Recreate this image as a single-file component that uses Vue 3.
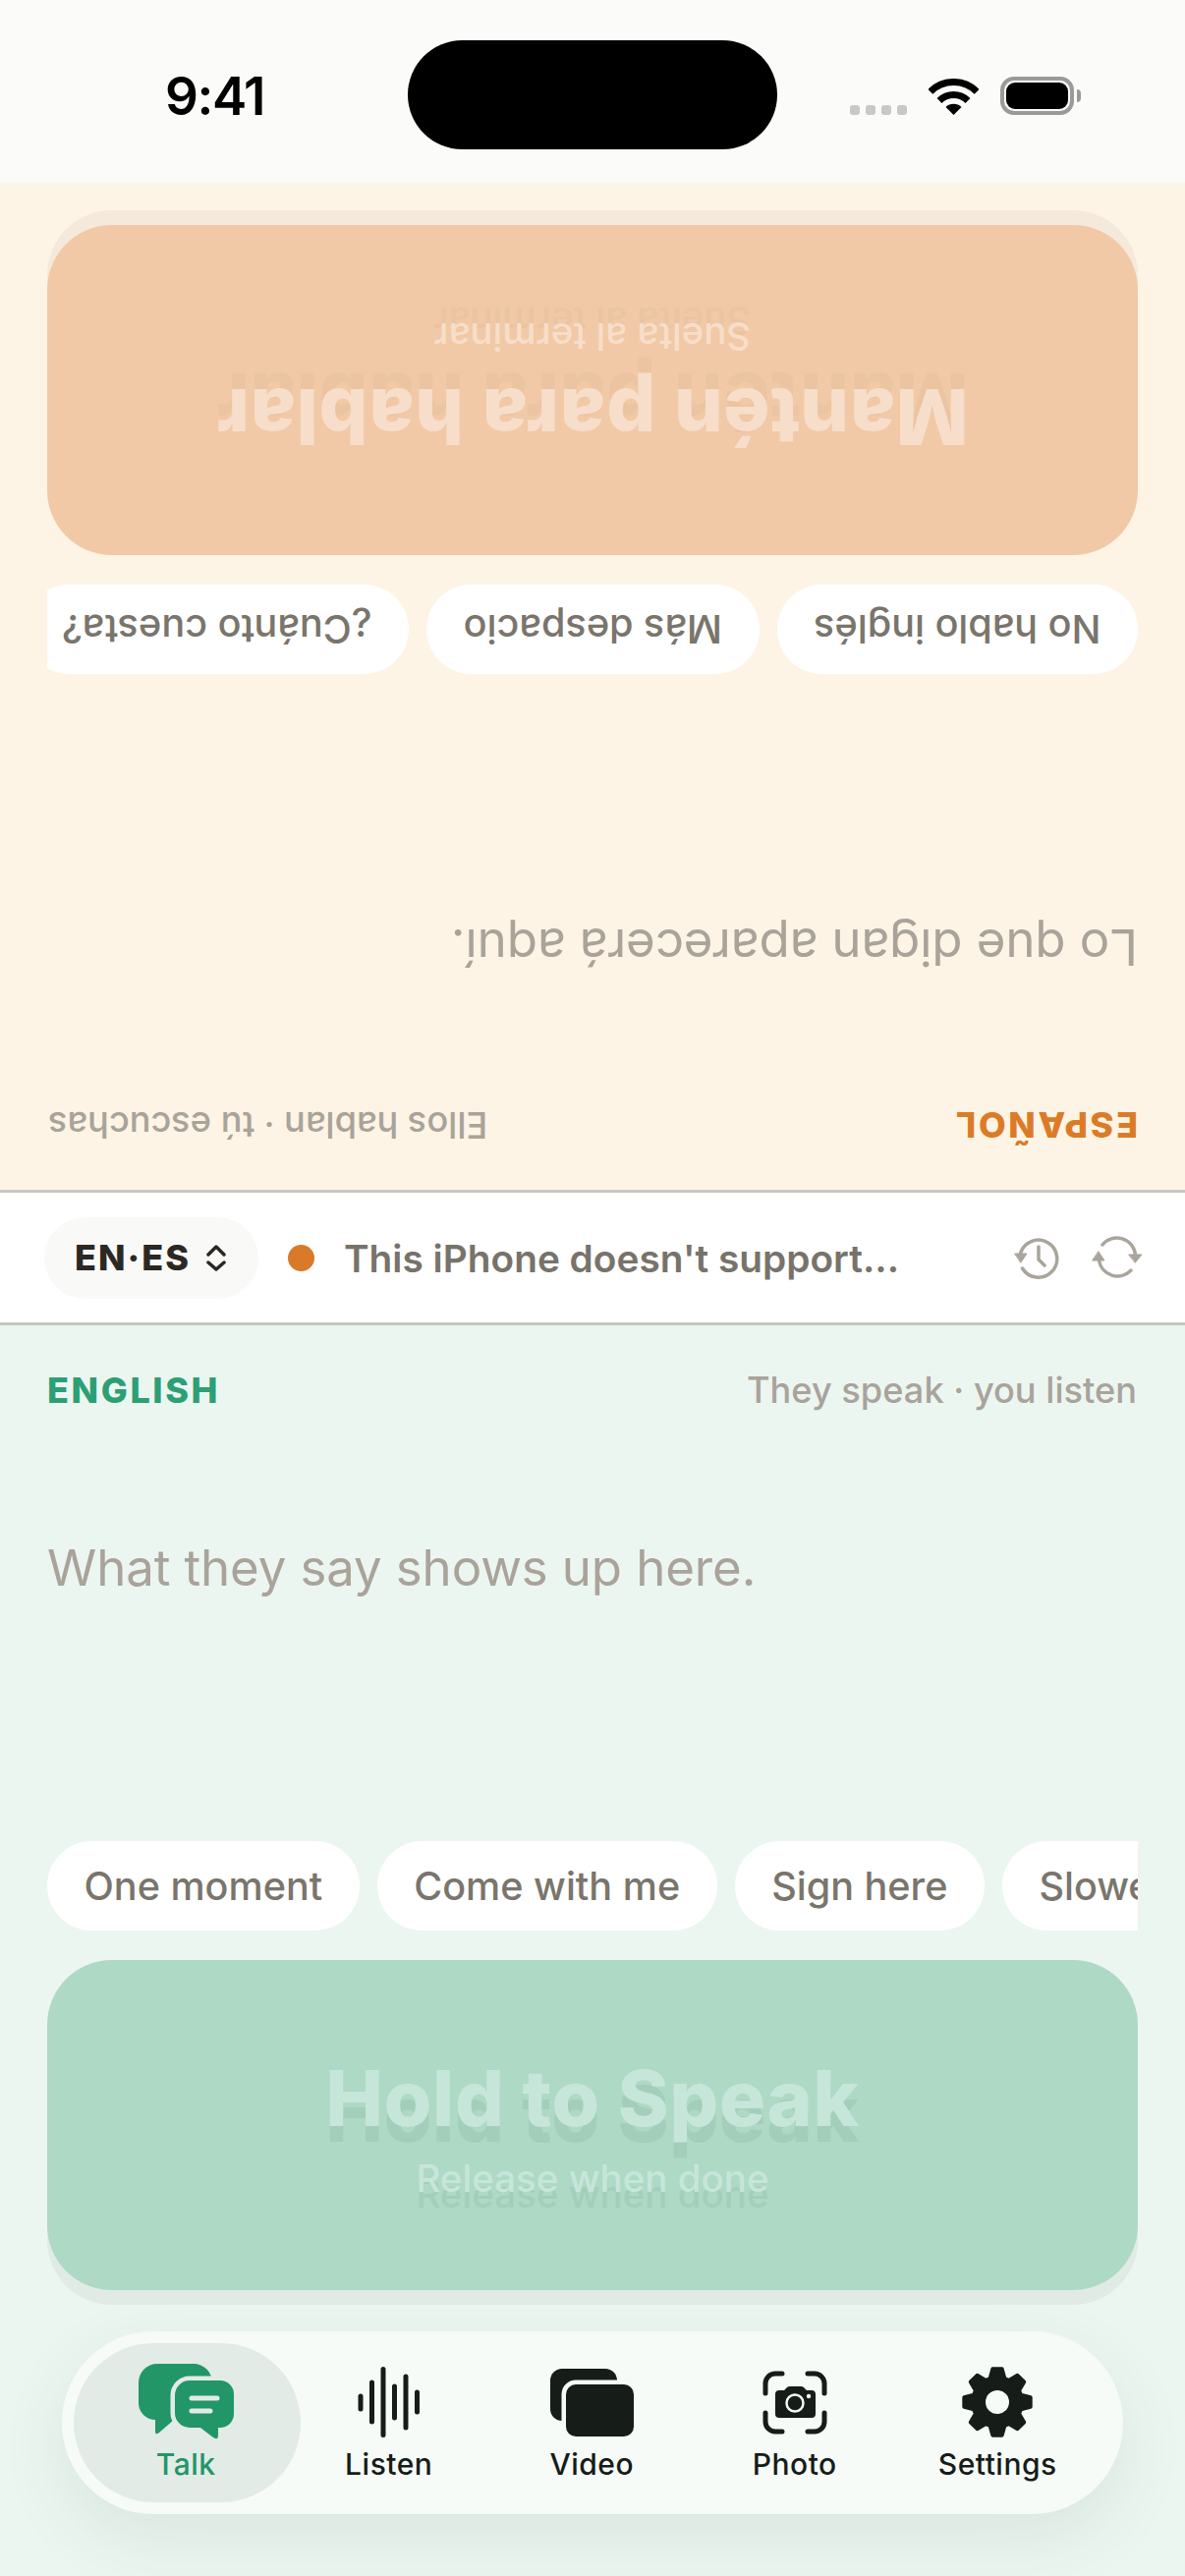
<template>
  <div class="phone">
    <div class="status-bar">
      <span class="time">9:41</span>
      <div class="island"></div>
      <div class="status-icons">
        <div class="signal"><i v-for="n in 4" :key="n"></i></div>
        <svg class="wifi" width="51" height="37" viewBox="0 0 51 37">
          <path d="M1.8 13.3A33.5 33.5 0 0 1 49.2 13.3" fill="none" stroke="#000" stroke-width="7" />
          <path d="M11 22.5A20.5 20.5 0 0 1 40 22.5" fill="none" stroke="#000" stroke-width="7" />
          <path d="M25.5 37L17.5 29A11.3 11.3 0 0 1 33.5 29Z" fill="#000" />
        </svg>
        <div class="battery"><div class="battery-level"></div></div>
      </div>
    </div>

    <template v-for="(panel, index) in panels" :key="panel.label">
      <section class="panel" :class="panel.theme">
        <div class="panel-head">
          <span class="lang">{{ panel.label }}</span>
          <span class="hint">{{ panel.hint }}</span>
        </div>
        <p class="transcript">{{ panel.placeholder }}</p>
        <div class="chips">
          <span class="chip" v-for="chip in panel.chips" :key="chip">{{ chip }}</span>
        </div>
        <div class="hold">
          <div class="hold-title">{{ panel.title }}</div>
          <div class="hold-sub">{{ panel.sub }}</div>
        </div>
      </section>

      <div class="middle" v-if="index === 0">
        <div class="lang-pill">
          <span>EN·ES</span>
          <svg width="20" height="27" viewBox="0 0 20 27" fill="none" stroke="#2b2824" stroke-width="3.5" stroke-linecap="round" stroke-linejoin="round">
            <path d="M2 10L10 2L18 10" />
            <path d="M2 18L10 25L18 18" />
          </svg>
        </div>
        <span class="dot"></span>
        <span class="message">This iPhone doesn't support...</span>
        <svg class="tool" width="60" height="50" viewBox="0 0 60 50" fill="none" stroke="#aaa59c" stroke-width="3.5" stroke-linecap="round" stroke-linejoin="round">
          <path d="M11.5 21A19 19 0 1 1 13.5 36" />
          <path d="M30 14V27L36 33" />
          <path d="M6 21H18L12 30Z" fill="#aaa59c" stroke-width="1" />
        </svg>
        <svg class="tool" width="60" height="50" viewBox="0 0 60 50" fill="none" stroke="#aaa59c" stroke-width="3.5" stroke-linecap="round" stroke-linejoin="round">
          <path d="M15 12A19 19 0 0 1 48.5 22" />
          <path d="M42 22H55L48.5 30Z" fill="#aaa59c" stroke-width="1" />
          <path d="M44 38A19 19 0 0 1 11.5 28" />
          <path d="M5 28H17L11 19Z" fill="#aaa59c" stroke-width="1" />
        </svg>
      </div>
    </template>

    <div class="tab-area">
      <nav class="tab-bar">
        <div class="tab" v-for="tab in tabs" :key="tab.name" :class="{ active: tab.name === 'Talk' }">
          <div class="tab-icon">
            <svg v-if="tab.name === 'Talk'" width="97" height="78" viewBox="0 0 97 78">
              <path fill="#229667" d="M19 0H56A19 19 0 0 1 75 19V57H36L21 70Q17 73 17 69V57A17 17 0 0 1 0 40V19A19 19 0 0 1 19 0Z" />
              <path fill="#229667" stroke="#e2ebe6" stroke-width="9" paint-order="stroke" d="M52 17H83A14 14 0 0 1 97 31V51A14 14 0 0 1 83 65H81V73Q81 78 76 75L63 65H52A15 15 0 0 1 37 50V32A15 15 0 0 1 52 17Z" />
              <path fill="none" stroke="#e2ebe6" stroke-width="5" stroke-linecap="round" d="M54 35H80M54 48H73" />
            </svg>
            <svg v-else-if="tab.name === 'Listen'" width="63" height="72" viewBox="0 0 63 72" fill="none" stroke="#161c18" stroke-width="5" stroke-linecap="round">
              <path d="M3 30V43M14.500 16V56M26 2.500V69.500M37.500 20V52M49 10V62M60.500 26V46" />
            </svg>
            <svg v-else-if="tab.name === 'Video'" width="85" height="69" viewBox="0 0 85 69">
              <rect width="68" height="53" rx="12" fill="#161c18" />
              <rect x="16" y="16" width="69" height="53" rx="10" fill="#161c18" stroke="#f6fbf8" stroke-width="9" paint-order="stroke" />
            </svg>
            <svg v-else-if="tab.name === 'Photo'" width="66" height="65" viewBox="0 0 66 65">
              <path fill="none" stroke="#161c18" stroke-width="5" stroke-linecap="round" d="M3 23V13A10 10 0 0 1 13 3H20M46 3H53A10 10 0 0 1 63 13V23M63 43V52A10 10 0 0 1 53 62H46M20 62H13A10 10 0 0 1 3 52V43" />
              <path fill="#161c18" d="M17 20H22L25 17Q26 16 28 16H39Q41 16 42 17L45 20H50Q54 20 54 24V44Q54 48 50 48H17Q13 48 13 44V24Q13 20 17 20Z" />
              <circle cx="33" cy="33" r="8.500" fill="none" stroke="#f6fbf8" stroke-width="2.500" />
              <circle cx="47" cy="26" r="2.200" fill="#f6fbf8" />
            </svg>
            <svg v-else width="72" height="72" viewBox="-36 -36 72 72">
              <path :d="gearPath" fill="#161c18" stroke="#161c18" stroke-width="4" stroke-linejoin="round" />
              <circle r="12" fill="#f6fbf8" />
            </svg>
          </div>
          <span class="tab-label">{{ tab.name }}</span>
        </div>
      </nav>
    </div>
  </div>
</template>

<script setup>
const panels = [
  {
    theme: "peach",
    label: "ESPAÑOL",
    hint: "Ellos hablan · tú escuchas",
    placeholder: "Lo que digan aparecerá aquí.",
    chips: ["No hablo inglés", "Más despacio", "¿Cuánto cuesta?"],
    title: "Mantén para hablar",
    sub: "Suelta al terminar"
  },
  {
    theme: "mint",
    label: "ENGLISH",
    hint: "They speak · you listen",
    placeholder: "What they say shows up here.",
    chips: ["One moment", "Come with me", "Sign here", "Slower please"],
    title: "Hold to Speak",
    sub: "Release when done"
  }
]

const tabs = [{ name: "Talk" }, { name: "Listen" }, { name: "Video" }, { name: "Photo" }, { name: "Settings" }]

// eight teeth, first one pointing straight up
const gearPath = (() => {
  const points = []
  for (let i = 0; i < 8; i++) {
    const a = (i * Math.PI) / 4 - Math.PI / 2
    const steps = [[-0.3, 25], [-0.14, 34], [0.14, 34], [0.3, 25]]
    steps.forEach(([offset, r]) => {
      points.push((r * Math.cos(a + offset)).toFixed(1) + " " + (r * Math.sin(a + offset)).toFixed(1))
    })
  }
  return "M" + points.join("L") + "Z"
})()
</script>

<style scoped>
.phone {
  width: 1206px;
  height: 2622px;
  overflow: hidden;
  font-family: Inter, "Noto Sans", sans-serif;
  background: #ecf6f1;
}
.status-bar {
  height: 186px;
  box-sizing: border-box;
  background: #fbfbf9;
  display: flex;
  padding-top: 41px;
}
.time {
  width: 415px;
  padding: 27px 0 0 22px;
  text-align: center;
  font-size: 53px;
  line-height: 60px;
  font-weight: 600;
  color: #000;
  box-sizing: border-box;
  letter-spacing: -1.5px;
}
.island {
  width: 376px;
  height: 111px;
  border-radius: 56px;
  background: #000;
}
.status-icons {
  display: flex;
  align-items: flex-end;
  padding: 37px 0 0 74px;
  height: 39px;
}
.signal {
  display: flex;
  gap: 6px;
  margin-right: 22px;
}
.signal i {
  width: 10px;
  height: 10px;
  border-radius: 3px;
  background: #c8c8c6;
}
.wifi {
  margin-right: 22px;
}
.battery {
  width: 75px;
  height: 39px;
  box-sizing: border-box;
  border: 4px solid #9a9a9a;
  border-radius: 14px;
  padding: 2px;
  position: relative;
}
.battery::after {
  content: "";
  position: absolute;
  right: -11px;
  top: 9px;
  width: 4px;
  height: 13px;
  border-radius: 0 4px 4px 0;
  background: #9a9a9a;
}
.battery-level {
  height: 100%;
  border-radius: 9px;
  background: #000;
}
.panel {
  height: 1025px;
  box-sizing: border-box;
  padding: 0 48px 43px;
  display: flex;
  flex-direction: column;
}
.peach {
  background: #fdf4e6;
  transform: rotate(180deg);
}
.mint {
  background: #ecf6f1;
}
.panel-head {
  display: flex;
  justify-content: space-between;
  align-items: baseline;
  padding-top: 44px;
  line-height: 44px;
}
.lang {
  font-size: 36px;
  font-weight: 800;
  letter-spacing: 2.6px;
}
.peach .lang {
  color: #dc7b27;
}
.mint .lang {
  color: #2c9f75;
}
.hint {
  font-size: 36.2px;
  font-weight: 500;
  color: #a9a39a;
  margin-right: 1px;
}
.transcript {
  flex: 1;
  margin: 0;
  padding-top: 126px;
  font-size: 51px;
  line-height: 66px;
  letter-spacing: -0.12px;
  color: #a9a39a;
}
.chips {
  display: flex;
  gap: 18px;
  overflow: hidden;
  flex-shrink: 0;
}
.chip {
  flex-shrink: 0;
  height: 91px;
  line-height: 92px;
  padding: 0 37.5px;
  border-radius: 46px;
  background: #fff;
  color: #7a756c;
  font-size: 39.6px;
  font-weight: 500;
  white-space: nowrap;
}
.hold {
  flex-shrink: 0;
  margin-top: 30px;
  height: 336px;
  box-sizing: border-box;
  padding-top: 4px;
  border-radius: 66px;
  display: flex;
  flex-direction: column;
  align-items: center;
  justify-content: center;
}
.peach .hold {
  background: #f1c9a6;
  box-shadow: 0 15px 0 #f5e9dc;
  color: #f7deca;
  text-shadow: 0 16px 0 #ebc4a2;
}
.mint .hold {
  background: #aed9c5;
  box-shadow: 0 15px 0 #e1ebe6;
  color: #c6e6da;
  text-shadow: 0 16px 0 #a3cfba;
}
.hold-title {
  font-size: 78.5px;
  line-height: 94px;
  font-weight: 800;
  letter-spacing: 0.7px;
}
.hold-sub {
  font-size: 38.5px;
  line-height: 50px;
  font-weight: 500;
  margin-top: 9px;
}
.middle {
  height: 138px;
  box-sizing: border-box;
  border-top: 3px solid #c8c6c2;
  border-bottom: 3px solid #c8c6c2;
  background: #fff;
  display: flex;
  align-items: center;
  padding: 0 39px 0 45px;
}
.lang-pill {
  width: 218px;
  height: 83px;
  box-sizing: border-box;
  padding-left: 31px;
  border-radius: 42px;
  background: #f9f9f7;
  display: flex;
  align-items: center;
  gap: 16px;
  color: #2b2824;
  font-size: 36px;
  font-weight: 800;
  letter-spacing: 2px;
}
.dot {
  width: 27px;
  height: 27px;
  border-radius: 50%;
  background: #d97a28;
  margin-left: 30px;
}
.message {
  flex: 1;
  margin-left: 30px;
  font-size: 38.8px;
  font-weight: 600;
  color: #78736a;
  white-space: nowrap;
}
.tool {
  margin-left: 20px;
}
.tab-area {
  margin-top: -1px;
  padding: 0 63px;
}
.tab-bar {
  height: 186px;
  box-sizing: border-box;
  padding: 12px 0 12px 23px;
  border-radius: 93px;
  background: #f6fbf8;
  box-shadow: 0 24px 70px rgba(30, 70, 50, 0.09);
  display: flex;
}
.tab {
  width: 206.5px;
  position: relative;
  display: flex;
  flex-direction: column;
  align-items: center;
  color: #161c18;
}
.tab.active {
  color: #229667;
}
.tab.active::before {
  content: "";
  position: absolute;
  left: -11px;
  top: 0;
  width: 231px;
  height: 162px;
  border-radius: 81px;
  background: #e2ebe6;
}
.tab-icon {
  position: relative;
  height: 78px;
  margin-top: 21px;
  display: flex;
  align-items: center;
}
.tab-label {
  position: relative;
  margin-top: 6px;
  font-size: 30px;
  line-height: 36px;
  font-weight: 500;
  letter-spacing: 0.5px;
}
</style>

<style>
body {
  margin: 0;
}
</style>
